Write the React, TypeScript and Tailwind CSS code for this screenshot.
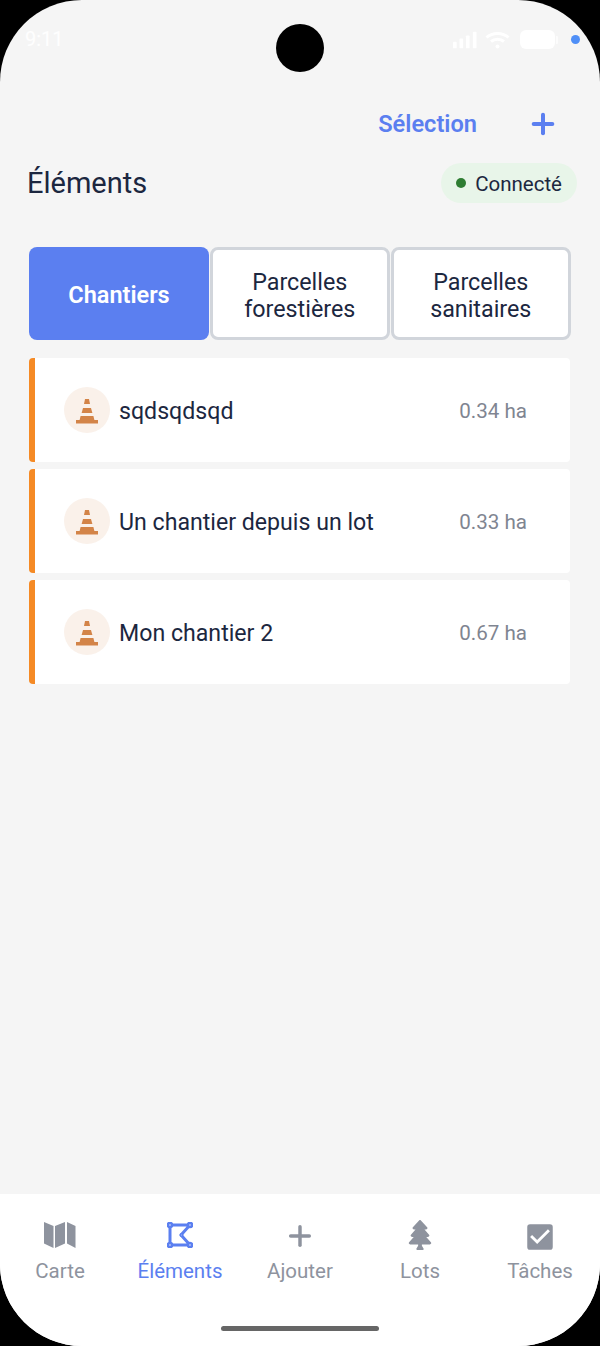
import { Plus } from "lucide-react"
import { FaTree } from "react-icons/fa"
import { MdCheckBox } from "react-icons/md"

const rows = [
  { name: "sqdsqdsqd", area: "0.34 ha" },
  { name: "Un chantier depuis un lot", area: "0.33 ha" },
  { name: "Mon chantier 2", area: "0.67 ha" },
]

function Cone() {
  return (
    <svg width="22" height="26" viewBox="0 0 22 26" fill="#d38448">
      <path d="M9 1h4l1 5H8z" />
      <path d="M7 10h8l1.4 5H5.6z" />
      <path d="M4.6 18h12.8l1 4H22v3.4H0V22h3.6z" />
    </svg>
  )
}

function MapIcon() {
  return (
    <svg width="32" height="26" viewBox="0 0 32 26" fill="#8e939e">
      <path d="M0 0L9.5 4V26L0 21.5Z" />
      <path d="M11 4L21 0V21.5L11 26Z" />
      <path d="M23 0L31.5 4V26L23 21.5Z" />
    </svg>
  )
}

function PolygonIcon() {
  return (
    <svg width="26" height="26" viewBox="0 0 26 26" fill="none" stroke="#5b7ff0" strokeWidth="3">
      <path d="M3 3H23L14 13L23 23H3Z" strokeLinejoin="round" />
      {[[3, 3], [23, 3], [23, 23], [3, 23]].map(([cx, cy]) => (
        <circle key={`${cx}-${cy}`} cx={cx} cy={cy} r="2" fill="#fff" strokeWidth="2.6" />
      ))}
      <circle cx="14.5" cy="13" r="1.2" fill="#fff" strokeWidth="1.6" />
    </svg>
  )
}

function NavItem({ label, active, children }: { label: string; active?: boolean; children: React.ReactNode }) {
  return (
    <div className="flex flex-1 flex-col items-center">
      <div className="flex h-[30px] w-full items-center justify-center">{children}</div>
      <div className={`mt-[9px] text-[20.5px] leading-[24px] ${active ? "text-[#5b7ff0]" : "text-[#8e939e]"}`}>{label}</div>
    </div>
  )
}

export default function App() {
  return (
    <div className="h-[1346px] w-[600px] bg-black font-['Roboto',sans-serif]">
      <div className="relative flex h-full w-full flex-col overflow-hidden rounded-[82px] bg-[#f5f5f5]">
        {/* status bar */}
        <div className="flex h-[102px] items-start justify-between pl-[25px] pr-[20px] pt-[27px]">
          <div className="text-[20px] leading-[24px] text-white/90">9:11</div>
          <div className="flex items-center gap-[8px] pt-[3px]">
            <svg width="24" height="18" viewBox="0 0 26 18" fill="#fff">
              <rect x="0" y="11" width="4" height="7" rx="1" />
              <rect x="7" y="7.5" width="4" height="10.5" rx="1" />
              <rect x="14" y="4" width="4" height="14" rx="1" />
              <rect x="21.5" y="0" width="4" height="18" rx="1" />
            </svg>
            <svg width="25" height="18" viewBox="0 0 25 18" fill="none" stroke="#fff" strokeWidth="3">
              <path d="M1.5 6.5C7.5 1 17.5 1 23.5 6.5" />
              <path d="M6 10.5C9.5 7.5 15.5 7.5 19 10.5" />
              <circle cx="12.5" cy="15.5" r="2" fill="#fff" stroke="none" />
            </svg>
            <div className="ml-[2px] flex items-center gap-[1px]">
              <div className="h-[19px] w-[35px] rounded-[6px] bg-white" />
              <div className="h-[8px] w-[2px] rounded-r-[1px] bg-white/70" />
            </div>
            <div className="ml-[5px] h-[9px] w-[9px] rounded-full bg-[#4f8ff7]" />
          </div>
        </div>

        <div className="absolute left-[276px] top-[24px] h-[48px] w-[48px] rounded-full bg-black" />

        {/* actions */}
        <div className="flex h-[46px] items-center justify-end pl-[27px] pr-[41px]">
          <div className="mr-[50px] text-[23.6px] font-semibold text-[#5b7ff0]">Sélection</div>
          <Plus size={32} strokeWidth={3} color="#5b7ff0" className="mb-[2px]" />
        </div>

        <div className="mt-[15px] flex h-[40px] items-center justify-between pl-[27px] pr-[23px]">
          <div className="mt-[2px] text-[29px] text-[#1c2740]">Éléments</div>
          <div className="flex h-[40px] items-center gap-[9px] rounded-[20px] bg-[#e8f5e9] pl-[15px] pr-[15px]">
            <div className="h-[10px] w-[10px] rounded-full bg-[#2e7d32]" />
            <div className="pt-[2px] text-[20.5px] text-[#1c2740]">Connecté</div>
          </div>
        </div>

        {/* tabs */}
        <div className="ml-[29px] mt-[44px] flex h-[93px] w-[542px] gap-[1px]">
          <div className="flex w-[180px] items-center justify-center rounded-[8px] bg-[#5b7ff0] pt-[4px] text-[23.5px] font-semibold text-white">
            Chantiers
          </div>
          <div className="flex w-[179.5px] items-center justify-center rounded-[8px] border-[3px] border-[#d1d5db] bg-white pt-[4px] text-center text-[23.3px] leading-[27px] text-[#1c2740]">
            Parcelles<br />forestières
          </div>
          <div className="flex w-[180.5px] items-center justify-center rounded-[8px] border-[3px] border-[#d1d5db] bg-white pt-[4px] text-center text-[23.3px] leading-[27px] text-[#1c2740]">
            Parcelles<br />sanitaires
          </div>
        </div>

        {/* list */}
        <div className="ml-[29px] mt-[18px] flex w-[541px] flex-col gap-[7px]">
          {rows.map((r) => (
            <div
              key={r.name}
              className="flex h-[104px] items-center rounded-[4px] border-l-[6px] border-[#f58a25] bg-white pl-[29px] pr-[43px]"
            >
              <div className="flex h-[46px] w-[46px] items-center justify-center rounded-full bg-[#faf1ea] pt-[2px]">
                <Cone />
              </div>
              <div className="ml-[9px] flex-1 pt-[4px] text-[23.15px] text-[#1c2740]">{r.name}</div>
              <div className="pt-[2px] text-[20.6px] text-[#7f8591]">{r.area}</div>
            </div>
          ))}
        </div>

        {/* bottom nav */}
        <div className="relative mt-auto flex h-[152px] bg-white pt-[26px]">
          <NavItem label="Carte">
            <MapIcon />
          </NavItem>
          <NavItem label="Éléments" active>
            <PolygonIcon />
          </NavItem>
          <NavItem label="Ajouter">
            <Plus size={32} strokeWidth={2.6} color="#8e939e" className="mt-[2px]" />
          </NavItem>
          <NavItem label="Lots">
            <FaTree size={30} color="#8e939e" />
          </NavItem>
          <NavItem label="Tâches">
            <MdCheckBox size={34} color="#8e939e" className="mt-[4px]" />
          </NavItem>
          <div className="absolute bottom-[15px] left-[221px] h-[5px] w-[158px] rounded-full bg-[#666]" />
        </div>
      </div>
    </div>
  )
}
